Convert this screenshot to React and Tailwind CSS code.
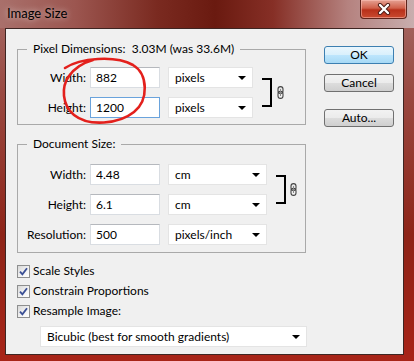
import React from "react";

const Arrow = () => (
  <span className="h-0 w-0 border-x-[4px] border-t-[4px] border-x-transparent border-t-black" />
);

const Dropdown = ({ value, className }) => (
  <div
    className={`flex h-[21px] items-center justify-between border border-[#e4e4e4] bg-white pl-[6px] pr-[6px] ${className}`}
  >
    <span>{value}</span>
    <Arrow />
  </div>
);

const Field = ({ label, value, unit, selW, focus }) => (
  <div className="flex items-center">
    <span className="w-[68px] text-right">{label}</span>
    <input
      readOnly
      value={value}
      className={`ml-[4px] h-[21px] w-[70px] border bg-white px-[5px] outline-none ${
        focus ? "border-[#6aa3dc]" : "border-[#d9dde2] border-t-[#b5b8bd]"
      }`}
    />
    <Dropdown value={unit} className={`ml-[8px] ${selW}`} />
  </div>
);

const Chain = () => (
  <svg width="7" height="13" viewBox="0 0 7 13">
    <rect x="1" y="0.6" width="5" height="7" rx="2.5" fill="#e8e8e8" stroke="#444" strokeWidth="1.1" />
    <rect x="1" y="5.4" width="5" height="7" rx="2.5" fill="none" stroke="#444" strokeWidth="1.1" />
    <line x1="3.5" y1="3" x2="3.5" y2="10" stroke="#888" strokeWidth="1" />
  </svg>
);

const Bracket = () => (
  <div className="h-[29px] w-[10px] border-y-2 border-r-2 border-black" />
);

const Check = ({ label }) => (
  <div className="flex h-[20px] items-center gap-[3px]">
    <span className="flex h-[13px] w-[13px] items-center justify-center border border-[#8e8f8f] bg-[linear-gradient(135deg,#d8d8d8,#f4f4f4_60%,#ffffff)]">
      <svg width="9" height="9" viewBox="0 0 9 9">
        <path d="M1 4.6 L3.4 7.4 L8 1.2" fill="none" stroke="#3a4f95" strokeWidth="1.8" />
      </svg>
    </span>
    <span>{label}</span>
  </div>
);

const Btn = ({ children, primary }) => (
  <button
    className={`h-[18px] w-[70px] rounded-[3px] border leading-none ${
      primary
        ? "border-[#3c7fb1] bg-[linear-gradient(#eaf6fd,#d9f0fc_50%,#bee6fd_50%,#a7d9f5)]"
        : "border-[#707070] bg-[linear-gradient(#f2f2f2,#ebebeb_50%,#dddddd_50%,#cfcfcf)]"
    }`}
  >
    {children}
  </button>
);

export default function App() {
  return (
    <div className="relative flex h-[361px] w-[414px] flex-col bg-[linear-gradient(180deg,#a56b66_0%,#9a4a42_25%,#8e2418_65%,#a82418_100%)] font-['Segoe_UI',Lato,sans-serif] text-[12px] text-black">
      {/* Title bar */}
      <div className="flex h-[28px] bg-[linear-gradient(90deg,#a9706b_0%,#9c5650_18%,#7a2a20_38%,#6a1a10_52%,#862f26_66%,#b5827f_84%,#c8aeae_100%)]">
        <span className="ml-[7px] self-center text-[13px] [text-shadow:0_0_6px_rgba(255,255,255,0.7)]">
          Image Size
        </span>
        <div className="ml-auto mr-[7px] flex h-[19px] w-[47px] items-center justify-center rounded-b-[4px] border border-t-0 border-[#5e241c] bg-[linear-gradient(#e5a193,#d0604a_45%,#b8301a_55%,#c94a30)] shadow-[inset_0_0_0_1px_rgba(255,200,190,0.5)]">
          <svg width="14" height="12" viewBox="0 0 14 12">
            <path d="M3 2 L11 10 M11 2 L3 10" stroke="#4a1a14" strokeWidth="4.2" strokeLinecap="round" />
            <path d="M3 2 L11 10 M11 2 L3 10" stroke="#ffffff" strokeWidth="2.4" strokeLinecap="round" />
          </svg>
        </div>
      </div>

      {/* Client area */}
      <div className="mb-[6px] ml-[5px] mr-[10px] flex flex-1 border border-[#3e2522] bg-[#f0f0f0] pl-[11px] pt-[12px]">
        <div className="flex w-[289px] flex-col">
          <fieldset className="border border-[#a9a9a9] pb-[6px] pt-[10px]">
            <legend className="ml-[9px] px-[6px] leading-[16px]">
              Pixel Dimensions:&nbsp; 3.03M (was 33.6M)
            </legend>
            <div className="flex items-center">
              <div className="flex flex-col gap-[9px]">
                <Field label="Width:" value="882" unit="pixels" selW="w-[85px]" />
                <Field label="Height:" value="1200" unit="pixels" selW="w-[85px]" focus />
              </div>
              <div className="ml-[9px]">
                <Bracket />
              </div>
              <div className="ml-[5px]">
                <Chain />
              </div>
            </div>
          </fieldset>

          <fieldset className="mt-[11px] border border-[#a9a9a9] pb-[7px] pt-[12px]">
            <legend className="ml-[9px] px-[6px] leading-[16px]">Document Size:</legend>
            <div className="flex items-center">
              <div className="flex flex-col gap-[9px]">
                <Field label="Width:" value="4.48" unit="cm" selW="w-[99px]" />
                <Field label="Height:" value="6.1" unit="cm" selW="w-[99px]" />
              </div>
              <div className="ml-[9px]">
                <Bracket />
              </div>
              <div className="ml-[4px]">
                <Chain />
              </div>
            </div>
            <div className="mt-[9px]">
              <Field label="Resolution:" value="500" unit="pixels/inch" selW="w-[99px]" />
            </div>
          </fieldset>

          <div className="mt-[8px] flex flex-col">
            <Check label="Scale Styles" />
            <Check label="Constrain Proportions" />
            <Check label="Resample Image:" />
          </div>
          <Dropdown
            value="Bicubic (best for smooth gradients)"
            className="ml-[23px] mt-[5px] h-[20px] w-[267px]"
          />
        </div>

        <div className="ml-[18px] mt-[5px] flex flex-col">
          <Btn primary>OK</Btn>
          <div className="mt-[10px]">
            <Btn>Cancel</Btn>
          </div>
          <div className="mt-[17px]">
            <Btn>Auto...</Btn>
          </div>
        </div>
      </div>

      {/* Red annotation circle */}
      <svg className="pointer-events-none absolute left-0 top-0" width="414" height="361">
        <path
          d="M65 68 C80 58, 115 55, 133 65 C148 74, 149 100, 134 112 C119 124, 89 127, 74 115 C62 105, 61 87, 69 76 C74 69, 82 63, 93 60"
          fill="none"
          stroke="#e3201c"
          strokeWidth="2.6"
          strokeLinecap="round"
        />
      </svg>
    </div>
  );
}
